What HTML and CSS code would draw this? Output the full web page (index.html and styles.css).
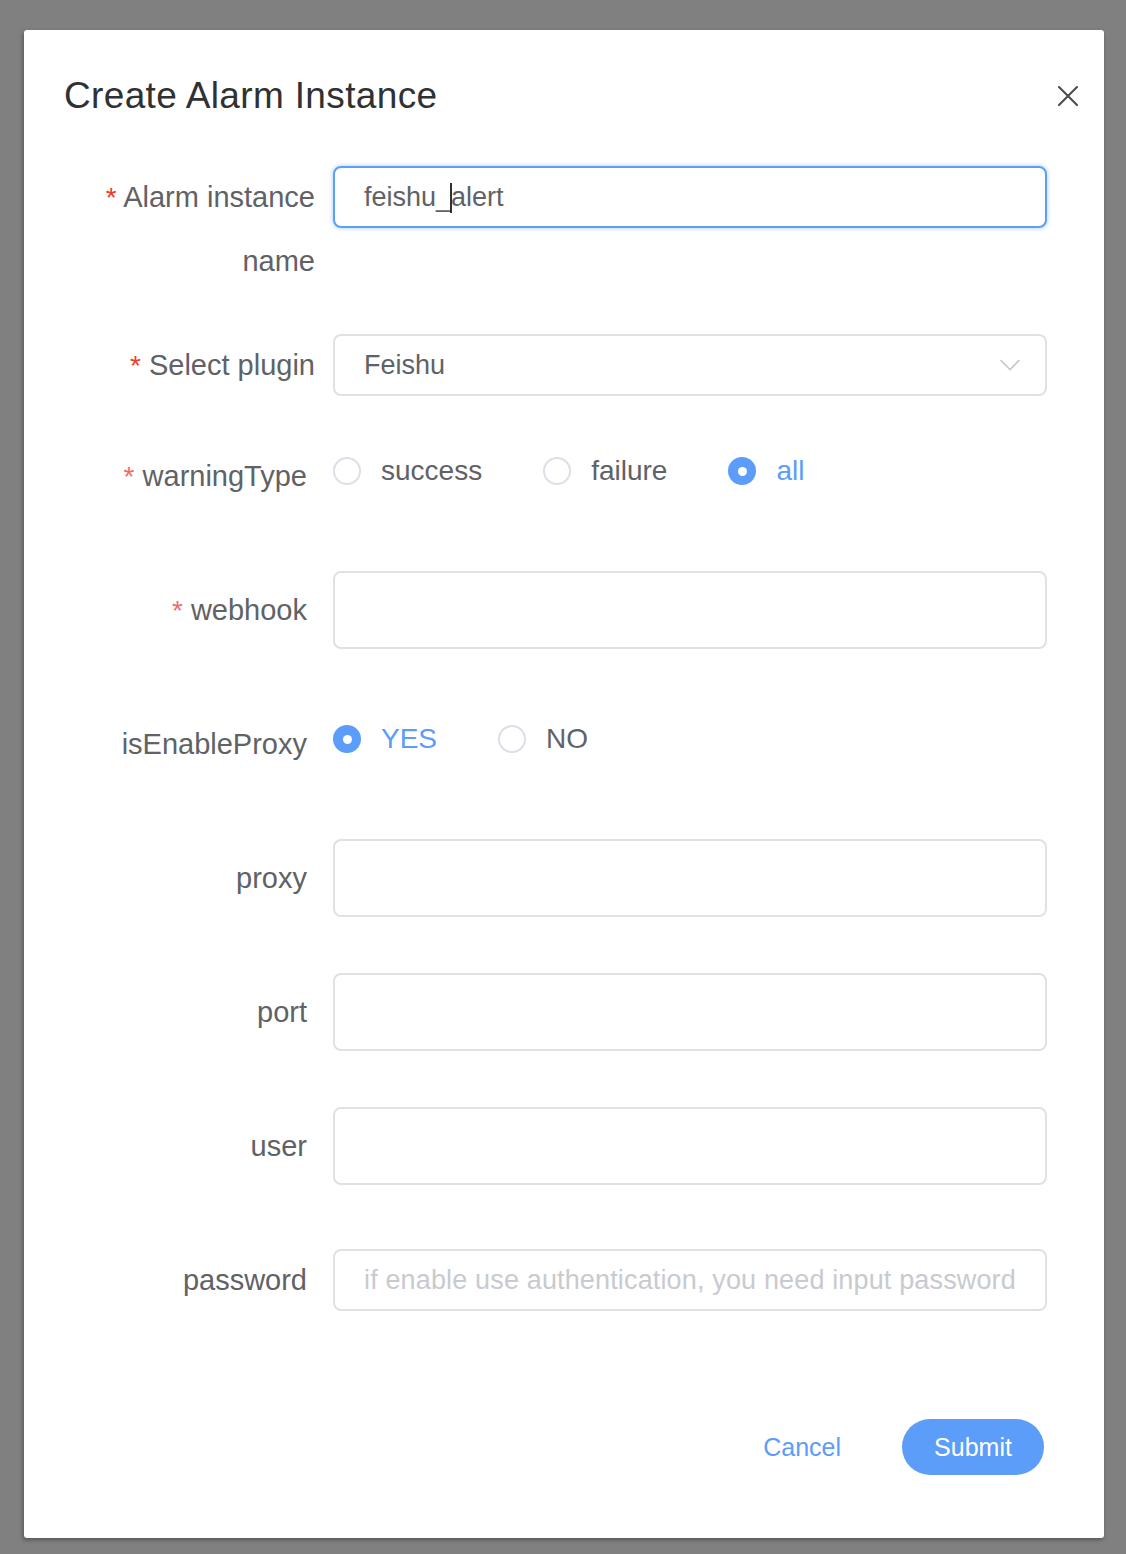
FILE: index.html
```html
<!DOCTYPE html>
<html lang="en">
<head>
<meta charset="utf-8">
<title>Create Alarm Instance</title>
<link rel="stylesheet" href="styles.css">
</head>
<body>
<div class="overlay">
  <div class="dialog">
    <div class="dialog-header">
      <h2 class="dialog-title">Create Alarm Instance</h2>
      <button class="dialog-close" aria-label="Close">
        <svg width="20" height="20" viewBox="0 0 20 20"><path d="M1 1 L19 19 M19 1 L1 19" stroke="#4a4a4a" stroke-width="2" fill="none" stroke-linecap="round"/></svg>
      </button>
    </div>
    <div class="form">
      <div class="item item--first">
        <div class="label label--wide label--two"><span class="req req--strong">*</span> Alarm instance name</div>
        <div class="control">
          <div class="input input--sm input--focus">feishu_<span class="caret"></span>alert</div>
        </div>
      </div>
      <div class="item item--second">
        <div class="label label--wide"><span class="req req--strong">*</span> Select plugin</div>
        <div class="control">
          <div class="input input--sm select">
            <span>Feishu</span>
            <svg class="chevron" width="22" height="14" viewBox="0 0 22 14"><path d="M1.5 2 L11 11.5 L20.5 2" stroke="#c4c7cf" stroke-width="1.6" fill="none"/></svg>
          </div>
        </div>
      </div>
      <div class="item">
        <div class="label label--radio"><span class="req">*</span> warningType</div>
        <div class="control radios">
          <label class="radio"><span class="dot"></span><span class="radio-text">success</span></label>
          <label class="radio"><span class="dot"></span><span class="radio-text">failure</span></label>
          <label class="radio radio--on"><span class="dot"></span><span class="radio-text">all</span></label>
        </div>
      </div>
      <div class="item">
        <div class="label label--lg"><span class="req">*</span> webhook</div>
        <div class="control"><div class="input input--lg"></div></div>
      </div>
      <div class="item">
        <div class="label label--radio">isEnableProxy</div>
        <div class="control radios radios--proxy">
          <label class="radio radio--on"><span class="dot"></span><span class="radio-text">YES</span></label>
          <label class="radio"><span class="dot"></span><span class="radio-text">NO</span></label>
        </div>
      </div>
      <div class="item item--tight">
        <div class="label label--lg">proxy</div>
        <div class="control"><div class="input input--lg"></div></div>
      </div>
      <div class="item item--tight">
        <div class="label label--lg">port</div>
        <div class="control"><div class="input input--lg"></div></div>
      </div>
      <div class="item">
        <div class="label label--lg">user</div>
        <div class="control"><div class="input input--lg"></div></div>
      </div>
      <div class="item item--last">
        <div class="label">password</div>
        <div class="control"><div class="input input--sm placeholder">if enable use authentication, you need input password</div></div>
      </div>
    </div>
    <div class="footer">
      <button class="btn-text">Cancel</button>
      <button class="btn-primary">Submit</button>
    </div>
  </div>
</div>
</body>
</html>
```

FILE: styles.css
```css
* { box-sizing: border-box; }

html, body {
  margin: 0;
  padding: 0;
  background: #808080;
  font-family: "Liberation Sans", Arial, Helvetica, sans-serif;
}

.overlay {
  width: 1126px;
  height: 1554px;
  padding: 30px 0 0 24px;
}

.dialog {
  position: relative;
  width: 1080px;
  height: 1508px;
  background: #fff;
  border-radius: 3px;
  box-shadow: -1px 2px 4px rgba(0, 0, 0, 0.35);
}

.dialog-header {
  padding: 44px 40px 0 40px;
}

.dialog-title {
  margin: 0;
  font-size: 37px;
  letter-spacing: 0.35px;
  line-height: 44px;
  height: 44px;
  font-weight: normal;
  color: #303133;
}

.dialog-close {
  position: absolute;
  top: 56px;
  right: 26px;
  width: 20px;
  height: 20px;
  padding: 0;
  border: 0;
  background: none;
  display: flex;
}

.form {
  padding: 47px 57px 0 40px;
}

.item {
  display: flex;
  align-items: flex-start;
  margin-bottom: 64px;
}

.item--first { margin-bottom: 41px; }
.item--second { margin-bottom: 49px; }
.item--tight { margin-bottom: 56px; }
.item--last { margin-bottom: 0; }

.label {
  flex: 0 0 269px;
  padding-right: 26px;
  text-align: right;
  font-size: 29px;
  line-height: 62px;
  color: #606266;
}

.label--wide { padding-right: 18px; }
.label--two { line-height: 64px; height: 128px; }
.label--lg { line-height: 78px; height: 78px; }
.label--radio { line-height: 62px; height: 62px; }

.req {
  color: #ef6b6b;
  font-size: 28px;
  line-height: 1;
}

.req--strong { color: #f03a2e; }

.control {
  flex: 1;
  min-width: 0;
}

.item--first .control { padding-top: 1px; }

.input {
  width: 100%;
  border: 2px solid #dfe1e6;
  border-radius: 8px;
  background: #fff;
  padding: 0 29px;
  font-size: 27px;
  color: #606266;
  display: flex;
  align-items: center;
}

.input--sm { height: 62px; }
.input--lg { height: 78px; }

.input--focus {
  border-color: #5d9ef6;
  box-shadow: 0 0 5px rgba(93, 158, 246, 0.55);
}

.caret {
  display: inline-block;
  width: 2px;
  height: 30px;
  background: #303133;
  margin: 0 -1px 0 -1px;
  position: relative;
  top: 1px;
}

.select {
  justify-content: space-between;
  padding-right: 24px;
}

.placeholder {
  color: #c8cad0;
  font-size: 27px;
  letter-spacing: 0.15px;
  white-space: nowrap;
  overflow: hidden;
}

.radios {
  display: flex;
  align-items: center;
  height: 52px;
}

.radios--proxy { height: 52px; }

.radio {
  display: flex;
  align-items: center;
  margin-right: 61px;
  font-size: 28px;
  color: #606266;
}

.dot {
  width: 28px;
  height: 28px;
  border: 2px solid #dcdfe6;
  border-radius: 50%;
  margin-right: 20px;
  position: relative;
  background: #fff;
}

.radio--on .dot {
  background: #5b9df8;
  border-color: #5b9df8;
}

.radio--on .dot::after {
  content: "";
  position: absolute;
  left: 50%;
  top: 50%;
  width: 9px;
  height: 9px;
  margin: -4.5px 0 0 -4.5px;
  border-radius: 50%;
  background: #fff;
}

.radio--on .radio-text { color: #5b9df8; }

.footer {
  display: flex;
  justify-content: flex-end;
  align-items: center;
  padding: 108px 60px 0 0;
}

.btn-text {
  border: 0;
  background: none;
  font-family: inherit;
  font-size: 25px;
  color: #5b9df8;
  padding: 0;
  margin-right: 61px;
}

.btn-primary {
  width: 142px;
  height: 56px;
  border: 0;
  border-radius: 28px;
  background: #5b9df8;
  color: #fff;
  font-family: inherit;
  font-size: 25px;
  padding: 0;
}
```
